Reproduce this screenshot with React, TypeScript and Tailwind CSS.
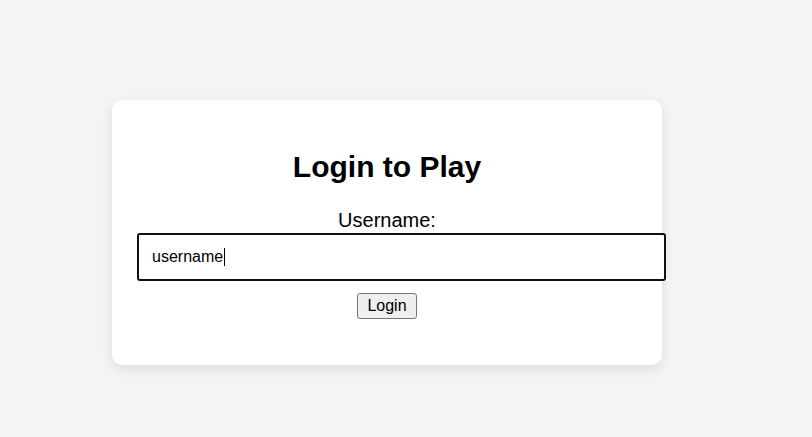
export default function App() {
  return (
    <div className="min-h-[437px] w-full bg-[#f4f4f4] pt-[100px] pl-[112px] font-['Liberation_Sans',Arial,sans-serif] text-black">
      <div className="w-[550px] h-[265px] rounded-[10px] bg-white px-[25px] pt-[50px] shadow-[0_4px_12px_rgba(0,0,0,0.1)] text-center">
        <h1 className="text-[30px] leading-[34px] font-bold">Login to Play</h1>
        <div className="mt-[25px] text-[20px] leading-[23px]">Username:</div>
        <div className="mt-px flex h-[48px] w-[529px] items-center rounded-[3px] border-2 border-[#111] bg-white px-[13px] text-left text-[16px] leading-[18px]">
          <span>username</span>
          <span className="ml-px inline-block h-[18px] w-px bg-black" />
        </div>
        <div className="mt-[12px] flex justify-center">
          <button className="h-[26px] rounded-[3px] border border-[#767676] bg-[#efefef] px-[9px] text-[16px] leading-[18px]">
            Login
          </button>
        </div>
      </div>
    </div>
  )
}
